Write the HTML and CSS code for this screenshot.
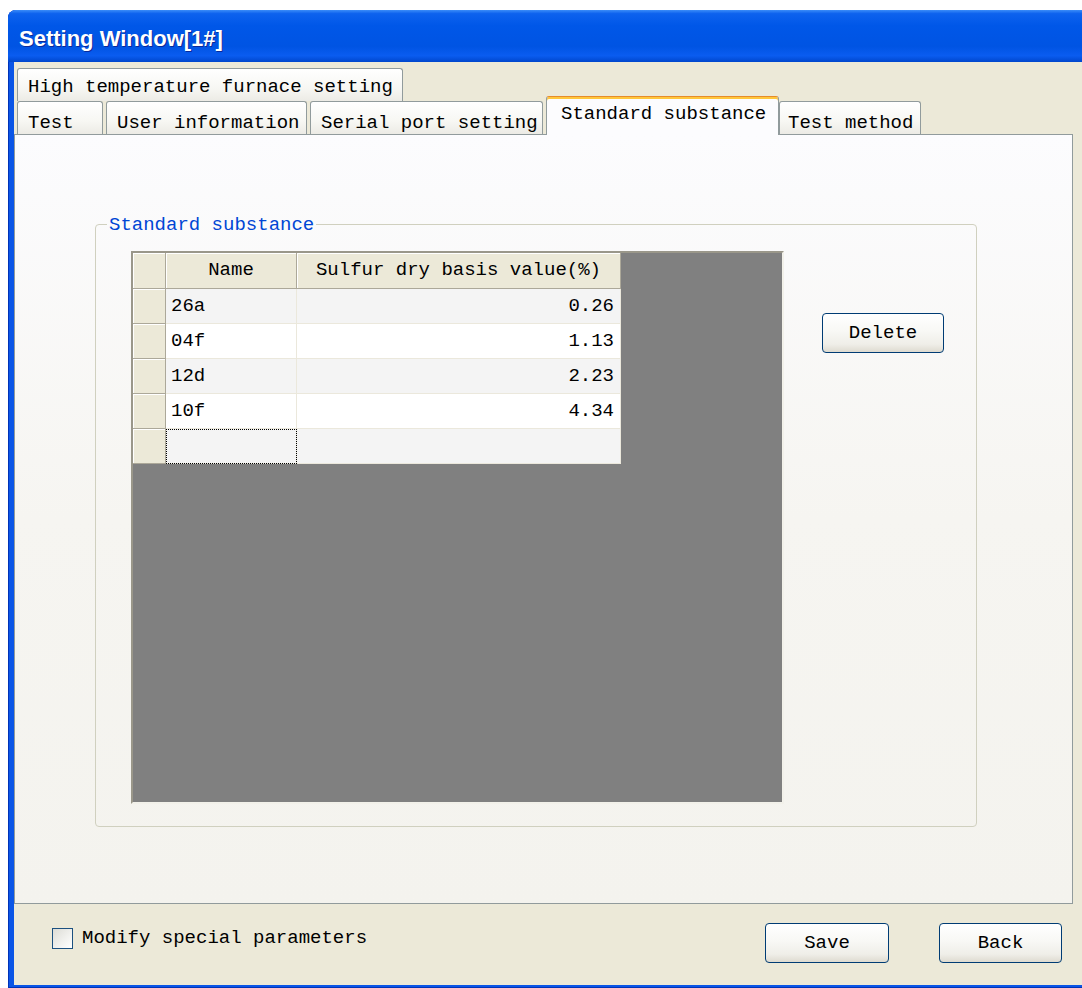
FILE: index.html
```html
<!DOCTYPE html>
<html lang="en">
<head>
<meta charset="utf-8">
<title>Setting Window[1#]</title>
<link rel="stylesheet" href="styles.css">
</head>
<body>
<div class="window">
  <div class="titlebar"><span class="title">Setting Window[1#]</span></div>
  <div class="client">
    <div class="tabstrip">
      <div class="tabrow">
        <div class="tab tab-furnace">High temperature furnace setting</div>
      </div>
      <div class="tabrow">
        <div class="tab tab-test">Test</div>
        <div class="tab tab-user">User information</div>
        <div class="tab tab-serial">Serial port setting</div>
        <div class="tab tab-standard is-selected">Standard substance</div>
        <div class="tab tab-method">Test method</div>
      </div>
    </div>

    <div class="tabpage">
      <fieldset class="group">
        <legend class="group-title">Standard substance</legend>
        <div class="group-body">
          <div class="grid">
            <table class="grid-table">
              <colgroup>
                <col class="col-rowhead">
                <col class="col-name">
                <col class="col-value">
              </colgroup>
              <thead>
                <tr class="head-row">
                  <th class="corner"></th>
                  <th>Name</th>
                  <th>Sulfur dry basis value(%)</th>
                </tr>
              </thead>
              <tbody>
                <tr class="row row-alt">
                  <td class="rowhead"></td>
                  <td class="cell-name">26a</td>
                  <td class="cell-value">0.26</td>
                </tr>
                <tr class="row">
                  <td class="rowhead"></td>
                  <td class="cell-name">04f</td>
                  <td class="cell-value">1.13</td>
                </tr>
                <tr class="row row-alt">
                  <td class="rowhead"></td>
                  <td class="cell-name">12d</td>
                  <td class="cell-value">2.23</td>
                </tr>
                <tr class="row">
                  <td class="rowhead"></td>
                  <td class="cell-name">10f</td>
                  <td class="cell-value">4.34</td>
                </tr>
                <tr class="row row-alt">
                  <td class="rowhead"></td>
                  <td class="cell-name is-focused"></td>
                  <td class="cell-value"></td>
                </tr>
              </tbody>
            </table>
          </div>
          <button class="btn btn-delete" type="button">Delete</button>
        </div>
      </fieldset>
    </div>

    <div class="footer">
      <label class="check">
        <span class="check-box"></span>
        <span class="check-label">Modify special parameters</span>
      </label>
      <div class="actions">
        <button class="btn btn-save" type="button">Save</button>
        <button class="btn btn-back" type="button">Back</button>
      </div>
    </div>
  </div>
</div>
</body>
</html>
```
FILE: styles.css
```css
html, body {
  margin: 0;
  padding: 0;
  overflow: hidden;
  background: #ffffff;
}

body {
  font-family: "Liberation Mono", monospace;
  font-size: 19px;
  line-height: 19px;
  color: #000;
}

/* Window frame: blue XP-style border around the client area */
.window {
  margin: 10px 0 0 8px;
  width: 1092px;
  height: 978px;
  box-sizing: border-box;
  padding: 0 6px 3px;
  background: #0a55e6;
  box-shadow: inset 1px 0 0 #0033b8, inset 0 -1px 0 #0033b8;
  border-radius: 8px 8px 0 0;
  display: flex;
  flex-direction: column;
}

.titlebar {
  height: 52px;
  margin: 0 -6px;
  padding: 6px 0 0 11px;
  box-sizing: border-box;
  border-radius: 8px 8px 0 0;
  background: linear-gradient(180deg, #3b8cf8 0%, #0d62ee 7%, #0057e8 30%, #0054e3 70%, #0a5cf0 88%, #0046cc 100%);
  color: #fff;
  font: bold 22px/46px "Liberation Sans", Arial, sans-serif;
  text-shadow: 1px 1px 0 #0a2a9a;
}

.client {
  flex: 1;
  background: #ece9d8;
  display: flex;
  flex-direction: column;
}

/* Tab headers, two rows */
.tabstrip {
  padding: 6px 0 0 3px;
}

.tabrow {
  display: flex;
  align-items: flex-end;
  gap: 3px;
  height: 33px;
}

.tab {
  box-sizing: border-box;
  height: 33px;
  padding: 12px 0 0 10px;
  border: 1px solid #919b9c;
  border-bottom: none;
  border-radius: 3px 3px 0 0;
  background: linear-gradient(180deg, #ffffff 0%, #f7f7f3 60%, #ecebe5 100%);
  white-space: nowrap;
}

.tab-furnace { width: 386px; padding-top: 9px; }
.tab-test { width: 86px; }
.tab-user { width: 201px; }
.tab-serial { width: 233px; }
.tab-method { width: 142px; padding-left: 8px; }

.tab-standard { width: 233px; padding-left: 14px; }

.tab.is-selected {
  position: relative;
  z-index: 1;
  height: 39px;
  margin-bottom: -1px;
  margin-right: -3px;
  padding-top: 8px;
  border-top: 1px solid #e68b2c;
  border-radius: 3px 3px 0 0;
  background: #fcfcfe;
  box-shadow: inset 0 2px 0 #ffc73c;
}

/* Tab page */
.tabpage {
  width: 1059px;
  height: 770px;
  box-sizing: border-box;
  border: 1px solid #919b9c;
  background: linear-gradient(180deg, #fcfcfe 0%, #f6f5f1 50%, #f4f3ee 100%);
  padding: 78px 0 0 80px;
}

.group {
  margin: 0;
  width: 882px;
  min-width: 0;
  box-sizing: border-box;
  border: 1px solid #d0d0bf;
  border-radius: 4px;
  padding: 16px 0 22px 35px;
}

/* the fieldset's left padding also shifts the legend, so pull it back */
.group-title {
  margin-left: -24px;
  padding: 3px 2px 0;
  line-height: 19px;
  color: #0046d5;
}

.group-body {
  display: flex;
  align-items: flex-start;
}

/* Data grid */
.grid {
  width: 653px;
  height: 553px;
  box-sizing: border-box;
  background: #808080;
  border-style: solid;
  border-width: 2px;
  border-color: #9a978a #f2f1ea #f2f1ea #9a978a;
}

.grid-table {
  border-collapse: separate;
  border-spacing: 0;
  table-layout: fixed;
  width: 488px;
}

.col-rowhead { width: 33px; }
.col-name { width: 131px; }
.col-value { width: 324px; }

.grid-table th,
.grid-table td {
  padding: 0;
  border-right: 1px solid #ebe8dc;
  border-bottom: 1px solid #ebe8dc;
  white-space: nowrap;
  overflow: hidden;
}

.head-row { height: 36px; }

.grid-table th {
  font-weight: normal;
  text-align: center;
  background: #ece9d8;
  border-right-color: #aca899;
  border-bottom-color: #aca899;
  box-shadow: inset 1px 1px 0 #ffffff;
}

.row { height: 35px; background: #ffffff; }
.row-alt { background: #f4f4f4; }

.grid-table td.rowhead {
  background: #ece9d8;
  border-right-color: #aca899;
  border-bottom-color: #aca899;
  box-shadow: inset 1px 1px 0 #ffffff;
}

.cell-name { padding-left: 5px !important; }
.cell-value { text-align: right; padding-right: 6px !important; }

.is-focused {
  outline: 1px dotted #000;
  outline-offset: -1px;
}

/* Buttons */
.btn {
  box-sizing: border-box;
  height: 40px;
  padding: 0;
  border: 1px solid #003c74;
  border-radius: 4px;
  background: linear-gradient(180deg, #ffffff 0%, #f8f8f5 45%, #efeee8 80%, #dedbd0 100%);
  font: inherit;
  color: #000;
}

.btn-delete {
  width: 122px;
  margin: 62px 0 0 38px;
}

.btn-save { width: 124px; }
.btn-back { width: 123px; }

/* Bottom bar */
.footer {
  width: 1059px;
  box-sizing: border-box;
  display: flex;
  align-items: flex-start;
  padding: 19px 11px 0 38px;
}

.check {
  display: flex;
  align-items: center;
  gap: 9px;
  margin-top: 5px;
}

.check-box {
  width: 21px;
  height: 21px;
  box-sizing: border-box;
  border: 1px solid #1c5180;
  background: linear-gradient(135deg, #dcdcd6 0%, #f2f2ef 60%, #ffffff 100%);
}

.actions {
  margin-left: auto;
  display: flex;
  gap: 50px;
}
```
